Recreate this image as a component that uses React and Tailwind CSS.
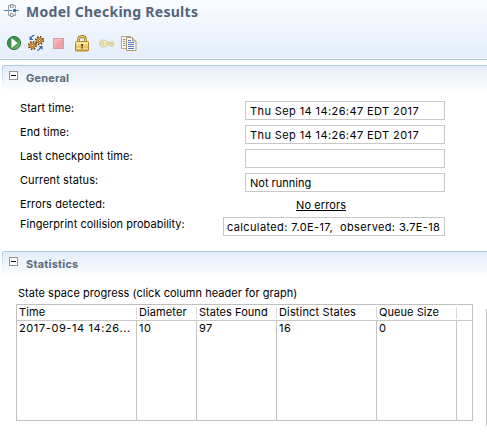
const TitleIcon = () => (
  <svg width="16" height="16" viewBox="0 0 16 16" fill="none">
    <path d="M0 7.500h8M11 7.500h4" stroke="#4a86ab" />
    <path d="M6 2.500H4.500v10H6M9 2.500h2.500v3M11.500 9.500v3H9" stroke="#8ba6ba" />
    <path d="M6.500 4V1.500h2.500V4M6.500 11v2.500h2.500V11" stroke="#8d8a86" />
    <path d="M6 4.500h3.500M6 10.500h3.500" stroke="#b9a99c" />
    <rect x="9" y="6" width="3" height="3" rx="1" fill="#2a6797" />
  </svg>
);

const RunIcon = () => (
  <svg width="16" height="16" viewBox="0 0 16 16">
    <defs>
      <linearGradient id="run" x1="0" y1="0" x2="1" y2="1">
        <stop offset="0" stopColor="#2f8550" />
        <stop offset="0.5" stopColor="#43934b" />
        <stop offset="1" stopColor="#8cc875" />
      </linearGradient>
    </defs>
    <circle cx="8" cy="8" r="6.600" fill="url(#run)" stroke="#277847" />
    <path d="M5.500 3v10L11.500 8z" fill="#fff" />
  </svg>
);

const Gear = ({ x, y }) => (
  <g transform={`translate(${x} ${y})`}>
    <circle r="3.700" fill="none" stroke="#6f3f0d" strokeWidth="1.900" strokeDasharray="1.500 1.406" />
    <circle r="2.700" fill="#f8c65c" stroke="#a2621a" strokeWidth="1" />
    <circle r="1" fill="#fff8e8" stroke="#6f3f0d" strokeWidth="0.900" />
  </g>
);

const GearsIcon = () => (
  <svg width="18" height="18" viewBox="0 0 18 18">
    <Gear x={5.5} y={11.500} />
    <Gear x={12.5} y={6.500} />
    <path d="M7.500 1.500H6L4 3.500" fill="none" stroke="#2d69a9" strokeWidth="1.200" />
    <path d="M2.500 2v4h4z" fill="#2d69a9" />
    <path d="M10 16h1.500l2-2" fill="none" stroke="#2d69a9" strokeWidth="1.200" />
    <path d="M15.500 16v-4h-4z" fill="#2d69a9" />
  </svg>
);

const StopIcon = () => (
  <svg width="11" height="11" viewBox="0 0 11 11">
    <rect x="0.500" y="0.500" width="10" height="10" fill="#f0a0a7" stroke="#dc9ba2" />
    <path d="M1.500 9.500v-8h8" fill="none" stroke="#f5bdc1" />
    <path d="M2 2h7L2 7z" fill="#f4b1b6" />
  </svg>
);

const LockIcon = () => (
  <svg width="14" height="17" viewBox="0 0 14 17">
    <defs>
      <linearGradient id="lock" x1="0" y1="0" x2="0" y2="1">
        <stop offset="0" stopColor="#ffe9a1" />
        <stop offset="1" stopColor="#dca944" />
      </linearGradient>
    </defs>
    <path d="M3.500 8V4.500Q3.500 1.500 7 1.500t3.500 3V8" fill="none" stroke="#a9822d" strokeWidth="2.800" />
    <path d="M3.500 8V4.500Q3.500 1.500 7 1.500t3.500 3V8" fill="none" stroke="#f5dc91" strokeWidth="1" />
    <rect x="0.500" y="6.500" width="13" height="9.500" rx="1" fill="url(#lock)" stroke="#b38326" />
    <path d="M1.500 8.500h11M1.500 13.500h11" stroke="#fff0b9" strokeWidth="0.700" />
    <path d="M6 9h2v2l-.5.5V14h-1v-2.500L6 11z" fill="#6b4a19" />
  </svg>
);

const KeyIcon = () => (
  <svg width="16" height="11" viewBox="0 0 16 11">
    <path d="M4.500 2c2 0 3 .8 3.500 2h6l1.500 1.500L14.500 7h-1v1.500h-1.500V7H8C7.500 8.200 6.500 9 4.500 9 2 9 .5 7.800.5 5.500S2 2 4.500 2z" fill="#f5e8b7" stroke="#d0c49b" strokeWidth="0.900" />
    <path d="M7 5.500h7" stroke="#dccb8e" />
    <circle cx="3.500" cy="5.500" r="1.100" fill="#fff" stroke="#b7ae8c" strokeWidth="0.800" />
  </svg>
);

const CopyIcon = () => (
  <svg width="16" height="16" viewBox="0 0 16 16">
    <path d="M.5 1.500h9v12h-9z" fill="#fbf8e5" stroke="#b3a884" />
    <path d="M2 4.500h2.500M2 6.500h2.500M2 8.500h2.500M2 10.500h2.500" stroke="#7f93b8" />
    <path d="M5.500 2.500h6l3.500 3.500v9.500H5.500z" fill="#f7faff" stroke="#a99c77" />
    <path d="M11.500 2.500V6H15" fill="#e9d9a1" stroke="#a99c77" />
    <path d="M7 5.500h3M7 7.500h6M7 9.500h6M7 11.500h6M7 13.500h6" stroke="#547ab8" />
  </svg>
);

const SectionHeader = ({ children }) => (
  <div className="ml-[2px] flex h-[27px] rounded-tl-[3px] border-t border-[#a9c9e6] bg-linear-to-b from-[#e2edf8] to-white pt-px">
    <div className="-mt-px h-[22px] w-px bg-linear-to-b from-[#a9c9e6] to-white" />
    <div className="mt-[4px] ml-[6px] flex size-[9px] items-center justify-center border border-[#929292] bg-white">
      <div className="h-px w-[5px] bg-black" />
    </div>
    <h2 className="mt-[3px] ml-[8px] text-[11px] leading-[16px] font-bold tracking-[0.2px] text-[#5b6b80]">{children}</h2>
  </div>
);

const Field = ({ label, tracking = "tracking-[0.4px]", children }) => (
  <div className="flex h-[24px] justify-between">
    <span className="leading-[14px] tracking-[0.08px]">{label}</span>
    <div className={`h-[19px] w-[200px] border border-[#c8c8c8] pl-[4px] leading-[19px] ${tracking}`}>{children}</div>
  </div>
);

const columns = [
  ["Time", "2017-09-14 14:26...", "w-[120px]", "tracking-[0.1px]", "tracking-[0.6px]"],
  ["Diameter", "10", "w-[60px]", "tracking-[0.1px]", "tracking-[0.5px]"],
  ["States Found", "97", "w-[80px]", "tracking-[0.05px]", "tracking-[0.3px]"],
  ["Distinct States", "16", "w-[100px]", "tracking-[0.15px]", "tracking-[0.5px]"],
  ["Queue Size", "0", "w-[80px]", "tracking-[0.05px]", "tracking-[0.3px]"],
];

export default function App() {
  return (
    <div className="h-[433px] w-[487px] overflow-hidden bg-white font-['Inter',sans-serif] text-[11px] text-black">
      <header className="h-[60px] border-b border-[#a7c7e8] bg-white pb-px">
        <div className="h-[58px] bg-linear-to-b from-[#fafcff] to-[#e4eefa]">
          <div className="flex h-[34px] pt-[3px] pl-[4px]">
            <TitleIcon />
            <h1 className="ml-[6px] font-['Noto_Sans',sans-serif] text-[14px] leading-[18px] font-bold tracking-[0.28px] whitespace-nowrap text-[#536579]">Model Checking Results</h1>
          </div>
          <div className="flex h-[18px] items-center pl-[6px]">
            <RunIcon />
            <div className="ml-[5px]"><GearsIcon /></div>
            <div className="ml-[8px]"><StopIcon /></div>
            <div className="ml-[11px]"><LockIcon /></div>
            <div className="ml-[10px]"><KeyIcon /></div>
            <div className="ml-[6px]"><CopyIcon /></div>
          </div>
        </div>
      </header>

      <section className="mt-[5px] h-[186px]">
        <SectionHeader>General</SectionHeader>
        <div className="mt-[9px] ml-[20px] w-[425px]">
          <Field label="Start time:">Thu Sep 14 14:26:47 EDT 2017</Field>
          <Field label="End time:">Thu Sep 14 14:26:47 EDT 2017</Field>
          <Field label="Last checkpoint time:" />
          <Field label="Current status:" tracking="tracking-[0px]">Not running</Field>
          <div className="flex h-[20px]">
            <span className="w-[276px] leading-[14px] tracking-[0.1px]">Errors detected:</span>
            <span className="mt-[2px] h-[12px] border-b border-black leading-[13px] tracking-[0.1px]">No errors</span>
          </div>
          <div className="flex justify-between">
            <span className="leading-[14px] tracking-[0.03px]">Fingerprint collision probability:</span>
            <div className="h-[19px] w-[222px] border border-[#c8c8c8] pl-[3px] leading-[19px] tracking-[0.37px] whitespace-pre">calculated: 7.0E-17,  observed: 3.7E-18</div>
          </div>
        </div>
      </section>

      <section>
        <SectionHeader>Statistics</SectionHeader>
        <p className="mt-[7px] ml-[18px] leading-[16px] tracking-[0.04px]">State space progress (click column header for graph)</p>
        <div className="mt-[3px] ml-[16px] flex items-start justify-between">
          <div className="flex h-[117px] w-[457px] border border-[#c0c0c0]">
            {columns.map(([name, value, width, headTracking, valueTracking]) => (
              <div key={name} className={`flex shrink-0 flex-col whitespace-nowrap ${width}`}>
                <div className="flex h-[16px] border-b border-[#c8c8c8]">
                  <div className={`flex-1 pl-[2px] leading-[15px] ${headTracking}`}>{name}</div>
                  <div className="mt-[2px] h-[12px] w-px bg-[#dadada]" />
                </div>
                <div className={`flex-1 border-r border-[#c4c4c4] pl-[2px] leading-[15px] ${valueTracking}`}>{value}</div>
              </div>
            ))}
            <div className="h-[16px] flex-1 border-b border-[#c8c8c8]" />
          </div>
          <div className="mt-[5px] h-[117px] w-px bg-[#c0c0c0]" />
        </div>
      </section>
    </div>
  );
}
